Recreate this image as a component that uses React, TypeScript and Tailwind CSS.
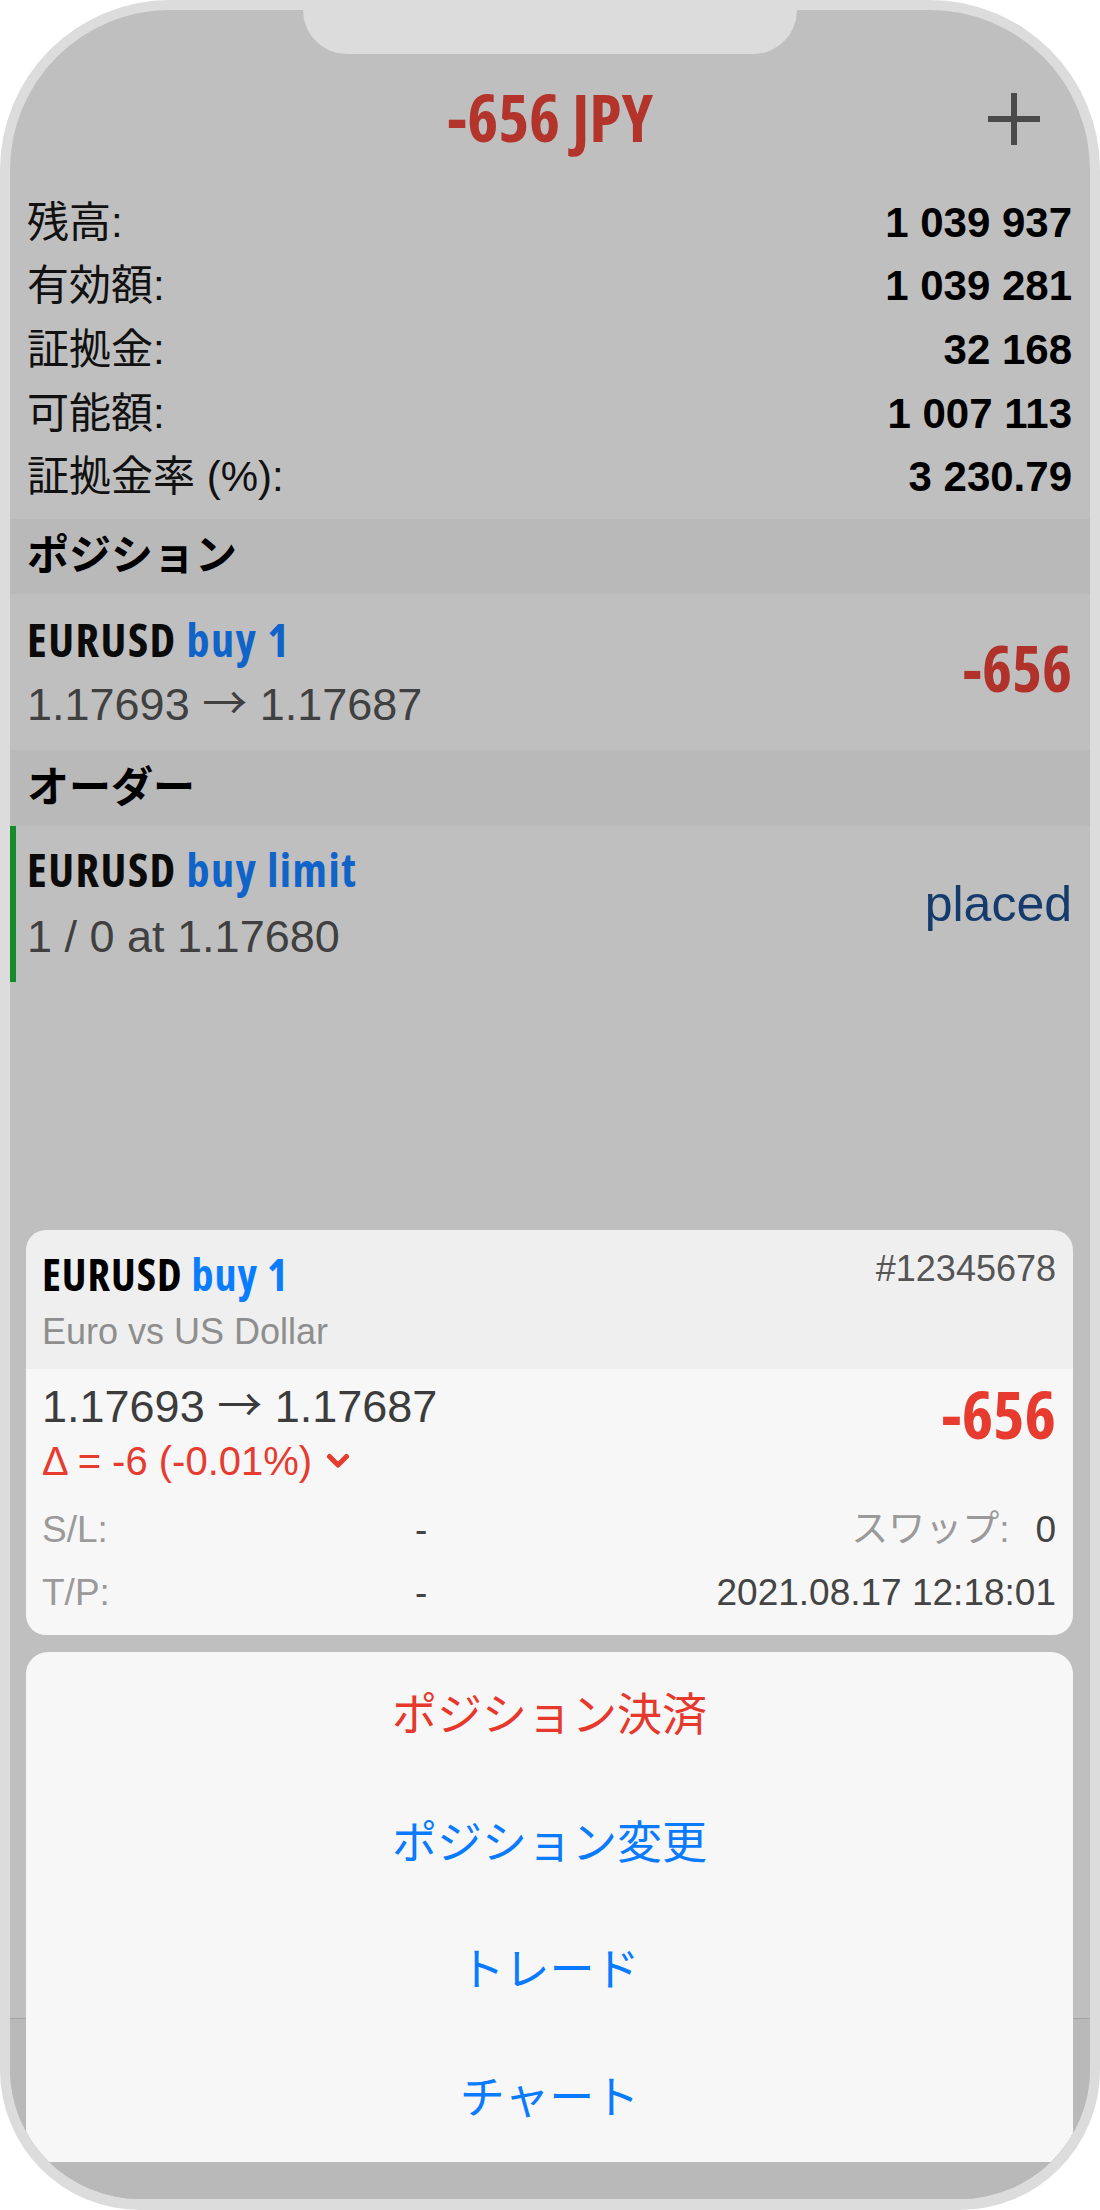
import React from 'react';

const account = [
  { label: '残高:', value: '1 039 937' },
  { label: '有効額:', value: '1 039 281' },
  { label: '証拠金:', value: '32 168' },
  { label: '可能額:', value: '1 007 113' },
  { label: '証拠金率 (%):', value: '3 230.79' },
];

const actions = [
  { label: 'ポジション決済', color: 'text-[#e6382c]' },
  { label: 'ポジション変更', color: 'text-[#0a7aff]' },
  { label: 'トレード', color: 'text-[#0a7aff]' },
  { label: 'チャート', color: 'text-[#0a7aff]' },
];

const sans = "font-['Liberation_Sans','Noto_Sans_CJK_JP',sans-serif]";
const narrow = "font-['Open_Sans','Noto_Sans_CJK_JP',sans-serif] font-stretch-semi-condensed font-bold";
const arrow = "font-['Noto_Sans_CJK_JP',sans-serif] leading-[0]";

function Prices({ from, to }: { from: string; to: string }) {
  return (
    <>
      {from} <span className={arrow}>→</span> {to}
    </>
  );
}

function SectionHeader({ title }: { title: string }) {
  return (
    <div className="h-[75px] shrink-0 bg-[#b9b9b9] flex items-center px-[17px]">
      <span className={`${sans} text-[42px] leading-none font-bold text-black`}>{title}</span>
    </div>
  );
}

function PositionCard() {
  return (
    <div className="rounded-[20px] overflow-hidden">
      <div className="h-[139px] bg-[#efefef] pt-[20px] pl-[16px] pr-[17px]">
        <div className="flex justify-between items-start">
          <div className={`${narrow} text-[44px] leading-[48px] tracking-[1px]`}>
            <span className="text-black">EURUSD</span> <span className="text-[#0a7dff]">buy 1</span>
          </div>
          <div className={`${sans} text-[36px] leading-[38px] text-[#555555]`}>#12345678</div>
        </div>
        <div className={`${sans} mt-[13px] text-[36px] leading-[41px] text-[#8e8e8e]`}>Euro vs US Dollar</div>
      </div>
      <div className="h-[266px] bg-[#f7f7f7] pt-[16px] pl-[16px] pr-[17px]">
        <div className="flex justify-between items-start">
          <div>
            <div className={`${sans} text-[45px] leading-[44px] text-[#3c3c3c]`}>
              <Prices from="1.17693" to="1.17687" />
            </div>
            <div className={`${sans} mt-[12px] h-[40px] flex items-center gap-[14px] text-[40px] leading-none text-[#e63b2e]`}>
              <span>Δ = -6 (-0.01%)</span>
              <svg width="24" height="16" viewBox="0 0 24 16" fill="none">
                <path d="M3.5 3.5 L12 12 L20.5 3.5" stroke="#e63b2e" strokeWidth="5" strokeLinecap="round" strokeLinejoin="round" />
              </svg>
            </div>
          </div>
          <div className={`${narrow} -mt-[7px] text-[67px] leading-[70px] text-[#e63b2e]`}>-656</div>
        </div>
        <div className={`${sans} mt-[26px] h-[44px] flex items-center text-[37px] leading-none`}>
          <span className="w-[373px] text-[#9a9a9a]">S/L:</span>
          <span className="text-[#444444]">-</span>
          <span className="flex-1 flex justify-end items-center">
            <span className="text-[#9a9a9a]">スワップ:</span>
            <span className="ml-[26px] text-[#444444]">0</span>
          </span>
        </div>
        <div className={`${sans} mt-[19px] h-[44px] flex items-center text-[37px] leading-none`}>
          <span className="w-[373px] text-[#9a9a9a]">T/P:</span>
          <span className="text-[#444444]">-</span>
          <span className="flex-1 text-right text-[#444444]">2021.08.17 12:18:01</span>
        </div>
      </div>
    </div>
  );
}

export default function App() {
  return (
    <div className="w-[1100px] h-[2210px] bg-white">
      <div className="relative w-full h-full bg-[#dcdcdc] rounded-t-[170px] rounded-b-[140px] pt-[10px] px-[10px] pb-[11px]">
        <div className="relative h-full bg-[#bfbfbf] rounded-t-[160px] rounded-b-[130px] overflow-hidden flex flex-col">
          {/* header */}
          <div className="h-[181px] pt-[65px] shrink-0">
            <div className="h-[88px] grid grid-cols-[1fr_auto_1fr] items-center">
              <div />
              <div className={`${narrow} mb-[6px] text-[66px] leading-[70px] text-[#b3342a]`}>-656 JPY</div>
              <div className="flex justify-end pr-[50px]">
                <svg width="52" height="52" viewBox="0 0 52 52">
                  <rect x="23" y="0" width="6" height="52" fill="#4a4a4a" />
                  <rect x="0" y="23" width="52" height="6" fill="#4a4a4a" />
                </svg>
              </div>
            </div>
          </div>

          {/* account */}
          <div className="shrink-0 pb-[10px]">
            {account.map((row) => (
              <div key={row.label} className={`${sans} h-[63.6px] flex items-center justify-between pl-[17px] pr-[18px] text-[42px] leading-none`}>
                <span className="text-[#111111]">{row.label}</span>
                <span className="font-bold text-black">{row.value}</span>
              </div>
            ))}
          </div>

          <SectionHeader title="ポジション" />
          <div className="h-[156px] shrink-0 flex items-center justify-between pl-[17px] pr-[18px]">
            <div className="self-start pt-[21px]">
              <div className={`${narrow} text-[46px] leading-[49px] tracking-[1.5px]`}>
                <span className="text-[#0b0b0b]">EURUSD</span> <span className="text-[#1063c8]">buy 1</span>
              </div>
              <div className={`${sans} mt-[18px] text-[45px] leading-[46px] text-[#404040]`}>
                <Prices from="1.17693" to="1.17687" />
              </div>
            </div>
            <div className={`${narrow} mb-[8px] text-[64px] leading-[70px] text-[#b0322a]`}>-656</div>
          </div>

          <div className="h-[76px] bg-[#b9b9b9] flex items-center px-[17px] shrink-0">
            <span className={`${sans} text-[42px] leading-none font-bold text-black`}>オーダー</span>
          </div>
          <div className="h-[156px] shrink-0 flex items-center justify-between border-l-[6px] border-[#178a2b] pl-[11px] pr-[18px]">
            <div className="self-start pt-[19px]">
              <div className={`${narrow} text-[46px] leading-[49px] tracking-[1.5px]`}>
                <span className="text-[#0b0b0b]">EURUSD</span> <span className="text-[#1063c8]">buy limit</span>
              </div>
              <div className={`${sans} mt-[20px] text-[45px] leading-[46px] text-[#404040]`}>1 / 0 at 1.17680</div>
            </div>
            <div className={`${sans} text-[50px] leading-none text-[#143b6b]`}>placed</div>
          </div>

          <div className="flex-1" />
          {/* tab bar under the sheet */}
          <div className="h-[181px] shrink-0 bg-[#b9b9b9] border-t border-[#a3a3a3]" />

          {/* action sheet overlay */}
          <div className="absolute left-[16px] right-[17px] bottom-[37px] flex flex-col gap-[17px]">
            <PositionCard />
            <div className="bg-[#f7f7f7] rounded-t-[22px]">
              {actions.map((a) => (
                <div key={a.label} className={`${sans} h-[127.5px] flex items-center justify-center text-[45px] leading-none ${a.color}`}>
                  {a.label}
                </div>
              ))}
            </div>
          </div>
        </div>

        {/* notch */}
        <div className="absolute top-0 left-[303px] w-[494px] h-[54px] bg-[#dcdcdc] rounded-b-[44px]" />
      </div>
    </div>
  );
}
